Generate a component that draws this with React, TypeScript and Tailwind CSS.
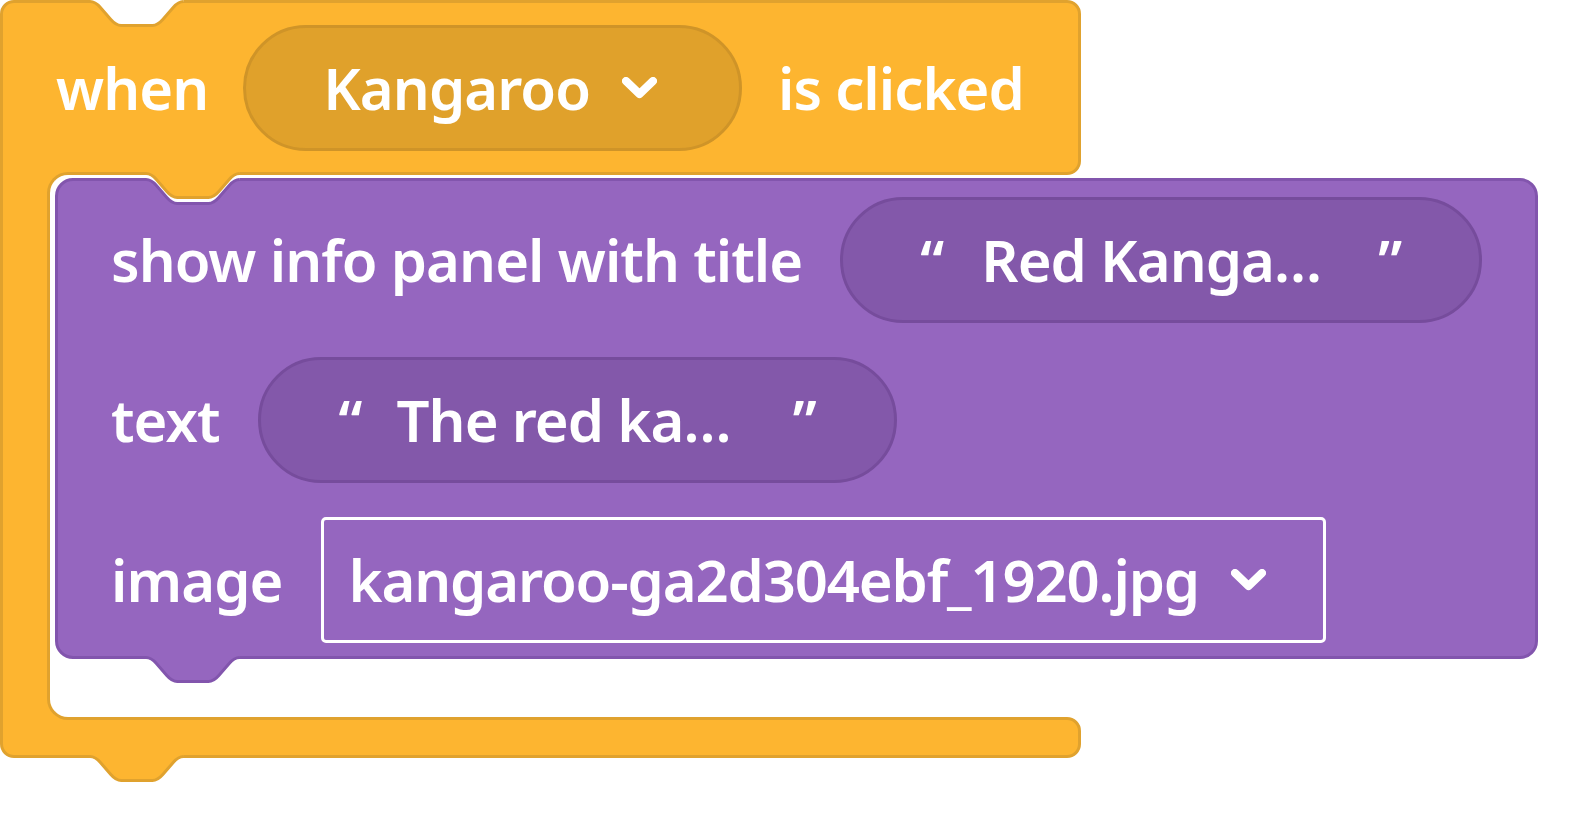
import React from "react";

const ORANGE = "#FDB530";
const ORANGE_EDGE = "#E0A22E";
const PURPLE = "#9566BF";
const PURPLE_EDGE = "#8255AD";

// scratch-like notch, 93.6 wide and 24 deep, starting at height y
const notch = (y: number) =>
  `M0 ${y} C5.2 ${y} 7.8 ${y + 3} 10.4 ${y + 6} L20.8 ${y + 18} C23.4 ${y + 21} 26 ${y + 24} 31.2 ${y + 24} H62.4 C67.6 ${y + 24} 70.2 ${y + 21} 72.8 ${y + 18} L83.2 ${y + 6} C85.8 ${y + 3} 88.4 ${y} 93.6 ${y}`;

function Chevron() {
  return (
    <svg width="35" height="23" viewBox="0 0 35 23" className="shrink-0">
      <path d="M4 4 L17.5 17 L31 4" fill="none" stroke="white" strokeWidth="8" strokeLinecap="round" strokeLinejoin="round" />
    </svg>
  );
}

// dip cut into the top edge of a block
function TopNotch({ fill, edge, className }: { fill: string; edge: string; className: string }) {
  return (
    <svg width="94" height="30" viewBox="0 0 94 30" className={`absolute overflow-visible ${className}`}>
      <path d={`${notch(1.5)} L93.6 -2 L0 -2 Z`} fill={fill} />
      <path d={notch(1.5)} fill="none" stroke={edge} strokeWidth="3" />
    </svg>
  );
}

function StringPill({ text, pl, g1, g2, pr }: { text: string; pl: string; g1: string; g2: string; pr: string }) {
  return (
    <div className={`flex h-[126px] items-center rounded-full border-[3px] border-[#764C9C] bg-[#8358AA] ${pl} ${pr}`}>
      <span>“</span>
      <span className={g1}>{text}</span>
      <span className={g2}>”</span>
    </div>
  );
}

function InfoBlock() {
  return (
    <div
      className="relative flex w-max flex-col gap-[34px] rounded-[18px] border-[3px] pt-[16px] pb-[13px] pl-[53px] pr-[53px]"
      style={{ background: PURPLE, borderColor: PURPLE_EDGE }}
    >
      {/* notch on top, with the tab of the event block sitting in it */}
      <svg width="94" height="40" viewBox="0 0 94 40" className="absolute left-[88px] top-[-9px] overflow-visible">
        <path d={`${notch(7.5)} L93.6 4 L0 4 Z`} fill="white" />
        <path d={notch(7.5)} fill="none" stroke={PURPLE_EDGE} strokeWidth="3" />
        <path d={`${notch(1.5)} L93.6 -3 L0 -3 Z`} fill={ORANGE} />
        <path d={notch(1.5)} fill="none" stroke={ORANGE_EDGE} strokeWidth="3" />
      </svg>
      {/* tab below */}
      <svg width="94" height="30" viewBox="0 0 94 30" className="absolute left-[88px] top-full overflow-visible">
        <path d={`${notch(1.5)} L93.6 -2 L0 -2 Z`} fill={PURPLE} />
        <path d={notch(1.5)} fill="none" stroke={PURPLE_EDGE} strokeWidth="3" />
      </svg>

      <div className="flex items-center gap-[38px]">
        <span>show info panel with title</span>
        <StringPill text="Red Kanga…" pl="pl-[77px]" g1="ml-[38px]" g2="ml-[57px]" pr="pr-[78px]" />
      </div>
      <div className="flex items-center gap-[38px]">
        <span>text</span>
        <StringPill text="The red ka…" pl="pl-[78px]" g1="ml-[35px]" g2="ml-[62px]" pr="pr-[78px]" />
      </div>
      <div className="flex items-center gap-[38px]">
        <span>image</span>
        <div className="flex h-[126px] items-center gap-[32px] rounded-[5px] border-[3px] border-white pl-[25px] pr-[57px]">
          <span className="tracking-[-1.15px]">kangaroo-ga2d304ebf_1920.jpg</span>
          <Chevron />
        </div>
      </div>
    </div>
  );
}

export default function App() {
  return (
    <div className="min-h-[816px] bg-white font-['Noto_Sans',sans-serif] text-[58px] font-semibold leading-none tracking-[-0.95px] text-white">
      <div className="inline-flex flex-col">
        {/* hat row */}
        <div
          className="relative flex items-center rounded-[14px] rounded-bl-none border-[3px] pt-[22px] pb-[21px] pl-[53px] pr-[54px]"
          style={{ background: ORANGE, borderColor: ORANGE_EDGE }}
        >
          <TopNotch fill="white" edge={ORANGE_EDGE} className="left-[87px] top-[-3px]" />
          <span>when</span>
          <div className="ml-[35px] flex h-[126px] items-center gap-[32px] rounded-full border-[3px] border-[#CF9428] bg-[#E0A12B] pl-[77px] pr-[82px]">
            <span>Kangaroo</span>
            <Chevron />
          </div>
          <span className="ml-[36px]">is clicked</span>
        </div>

        {/* mouth of the C block */}
        <div className="flex">
          <div
            className="relative z-10 -my-[3px] w-[50px] shrink-0 border-x-[3px]"
            style={{ background: ORANGE, borderColor: ORANGE_EDGE }}
          />
          <div className="relative w-0">
            <div className="absolute left-[-3px] top-[-3px] z-20 size-[24px]" style={{ background: ORANGE }}>
              <div className="size-full rounded-tl-[21px] border-l-[3px] border-t-[3px] bg-white" style={{ borderColor: ORANGE_EDGE }} />
            </div>
            <div className="absolute bottom-[-3px] left-[-3px] z-20 size-[24px]" style={{ background: ORANGE }}>
              <div className="size-full rounded-bl-[21px] border-b-[3px] border-l-[3px] bg-white" style={{ borderColor: ORANGE_EDGE }} />
            </div>
            <div className="relative z-30 pt-[3px] pb-[58px] pl-[5px]">
              <InfoBlock />
            </div>
          </div>
        </div>

        {/* foot of the C block */}
        <div
          className="relative h-[41px] rounded-[14px] rounded-tl-none border-[3px]"
          style={{ background: ORANGE, borderColor: ORANGE_EDGE }}
        >
          <svg width="94" height="30" viewBox="0 0 94 30" className="absolute left-[87px] top-full overflow-visible">
            <path d={`${notch(1.5)} L93.6 -2 L0 -2 Z`} fill={ORANGE} />
            <path d={notch(1.5)} fill="none" stroke={ORANGE_EDGE} strokeWidth="3" />
          </svg>
        </div>
      </div>
    </div>
  );
}
